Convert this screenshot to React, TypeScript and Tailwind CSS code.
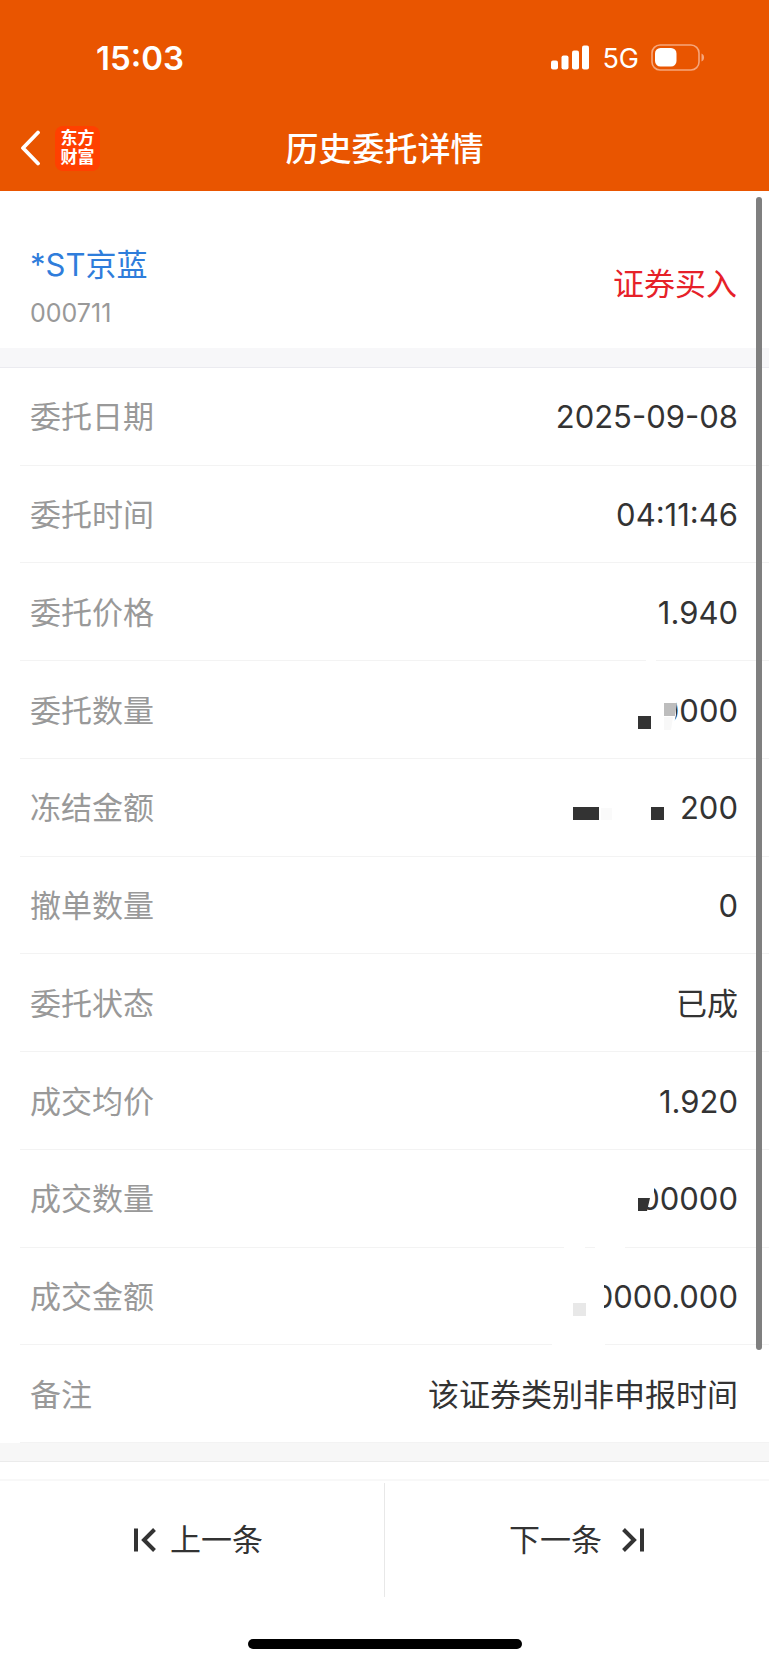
import type { ReactNode } from "react";

type Row = { label: string; value: string; mask?: ReactNode };

// Mosaic blocks sit over the value, in a box of 248 x 98 at the row's right end
const rows: Row[] = [
  { label: "委托日期", value: "2025-09-08" },
  { label: "委托时间", value: "04:11:46" },
  { label: "委托价格", value: "1.940" },
  {
    label: "委托数量",
    value: "0000",
    mask: (
      <>
        <path d="M125 -2h10v4h-10z" fill="#fff" />
        <path d="M112 36h43v18l-4 18h-39z" fill="#fff" />
        <path d="M117 55h13v13h-13z" fill="#333" />
        <path d="M143 42h13l-2 13h-11z" fill="#bdbdbd" />
        <path d="M143 56h9l-2 13h-7z" fill="#f8f8f8" />
      </>
    ),
  },
  {
    label: "冻结金额",
    value: "200",
    mask: (
      <>
        <path d="M52 48h26v13h-26zM130 48h13v13h-13z" fill="#333" />
        <path d="M80 49h11v12h-11z" fill="#fafafa" />
      </>
    ),
  },
  { label: "撤单数量", value: "0" },
  { label: "委托状态", value: "已成" },
  { label: "成交均价", value: "1.920" },
  {
    label: "成交数量",
    value: "00000",
    mask: (
      <>
        <path d="M112 34h21v14l-5 4 -4 12h-12z" fill="#fff" />
        <path d="M117 48h12l-3 13h-9z" fill="#333" />
      </>
    ),
  },
  {
    label: "成交金额",
    value: "0000.000",
    mask: (
      <>
        <path d="M43 -2h21v4h-21zM74 -2h30v4h-30z" fill="#fff" />
        <path d="M31 34h52v30h-52zM31 95h53v4h-53z" fill="#fff" />
        <path d="M52 55h13v13h-13z" fill="#e8e8e8" />
      </>
    ),
  },
  { label: "备注", value: "该证券类别非申报时间" },
];

function StatusBar() {
  return (
    <div className="flex h-[107px] items-center justify-between pt-2 pr-16 pl-24">
      <span className="text-[33px] leading-10 font-semibold">15:03</span>
      <div className="flex items-center gap-3">
        <svg width="39" height="25" viewBox="0 0 39 25" fill="currentColor" aria-hidden="true">
          <rect x="0" y="15.5" width="7" height="9" rx="2" />
          <rect x="10.5" y="10.5" width="7" height="14" rx="2" />
          <rect x="21" y="5.5" width="7" height="19" rx="2" />
          <rect x="31" y="0.5" width="7" height="24" rx="2" />
        </svg>
        <span className="pt-0.5 text-[27px] leading-8">5G</span>
        <svg width="54" height="27" viewBox="0 0 54 27" fill="none" aria-hidden="true">
          <rect x="1" y="1" width="47" height="25" rx="8" stroke="#f6a67b" strokeWidth="1.6" />
          <rect x="4" y="4" width="21.5" height="18.5" rx="5.5" fill="#fff" />
          <path d="M50.5 9.5c3.4 1.2 3.4 6.8 0 8z" fill="#f6a67b" />
        </svg>
      </div>
    </div>
  );
}

function Header() {
  return (
    <header className="bg-[#e95500] text-white">
      <StatusBar />
      <div className="grid h-[84px] grid-cols-[1fr_auto_1fr] items-center">
        <div className="flex items-center gap-3 pb-0.5 pl-5">
          <button type="button" aria-label="返回">
            <svg width="23" height="36" viewBox="0 0 23 36" fill="none" stroke="currentColor" strokeWidth="3.8" strokeLinecap="round" strokeLinejoin="round">
              <path d="M18 2.5 3 18l15 15.5" />
            </svg>
          </button>
          <div className="flex size-[45px] flex-col items-center justify-center rounded-lg bg-[#ff4000] text-[17px] leading-[19px] font-bold">
            <span>东方</span>
            <span>财富</span>
          </div>
        </div>
        <h1 className="text-[33px] leading-10 font-medium">历史委托详情</h1>
      </div>
    </header>
  );
}

function DetailRow({ label, value, mask }: Row) {
  return (
    <div className="relative ml-5 flex flex-1 items-center justify-between border-b border-[#f3f3f3] pt-0.5 pr-[31px] pl-[10px] text-[31px] leading-10">
      <dt className="text-[#999]">{label}</dt>
      <dd className="text-[#333]">{value}</dd>
      {mask && (
        <svg className="absolute top-0 right-0 overflow-visible" width="248" height="98" viewBox="0 0 248 98" aria-hidden="true">
          {mask}
        </svg>
      )}
    </div>
  );
}

export default function App() {
  return (
    <div className="flex min-h-screen flex-col bg-white font-['Inter','Noto_Sans_CJK_SC',sans-serif]">
      <Header />

      <main className="relative flex flex-1 flex-col">
        <section className="flex h-[157px] items-center justify-between pt-7 pr-8 pl-[30px]">
          <div className="pt-1.5">
            <h2 className="text-[31px] leading-[52px] text-[#2f7ddb]">*ST京蓝</h2>
            <p className="text-[25px] leading-[44px] text-[#999]">000711</p>
          </div>
          <span className="text-[31px] leading-10 text-[#e62129]">证券买入</span>
        </section>

        <div className="h-5 border-b border-[#ebebf0] bg-[#f7f7f9]" />

        <dl className="flex flex-1 flex-col">
          {rows.map((row) => (
            <DetailRow key={row.label} {...row} />
          ))}
        </dl>

        <div className="h-[19px] border-b border-[#ebebeb] bg-[#f7f7f7]" />

        {/* scroll indicator */}
        <div className="absolute top-1.5 right-[7px] bottom-28 w-1.5 rounded-full bg-[#7f7f7f]" />
      </main>

      <footer className="pt-[17px]">
        <nav className="grid h-[120px] grid-cols-[1fr_1px_1fr] border-t-2 border-[#f8f8f8] text-[31px] leading-10 text-[#333]">
          <button type="button" className="flex items-center justify-center gap-3.5 pl-3">
            <svg width="23" height="24" viewBox="0 0 23 24" fill="none" stroke="currentColor" strokeWidth="4" aria-hidden="true">
              <path d="M3 .5v23M21.5 1.5 11 12l10.500 10.500" />
            </svg>
            上一条
          </button>
          <div className="my-0.5 bg-[#e8e8e8]" />
          <button type="button" className="flex items-center justify-center gap-5">
            下一条
            <svg width="23" height="24" viewBox="0 0 23 24" fill="none" stroke="currentColor" strokeWidth="4" aria-hidden="true">
              <path d="M20 .5v23M1.500 1.500 12 12 1.500 22.500" />
            </svg>
          </button>
        </nav>
        <div className="flex justify-center pt-10 pb-4">
          <div className="h-2.5 w-[274px] rounded-full bg-black" />
        </div>
      </footer>
    </div>
  );
}
